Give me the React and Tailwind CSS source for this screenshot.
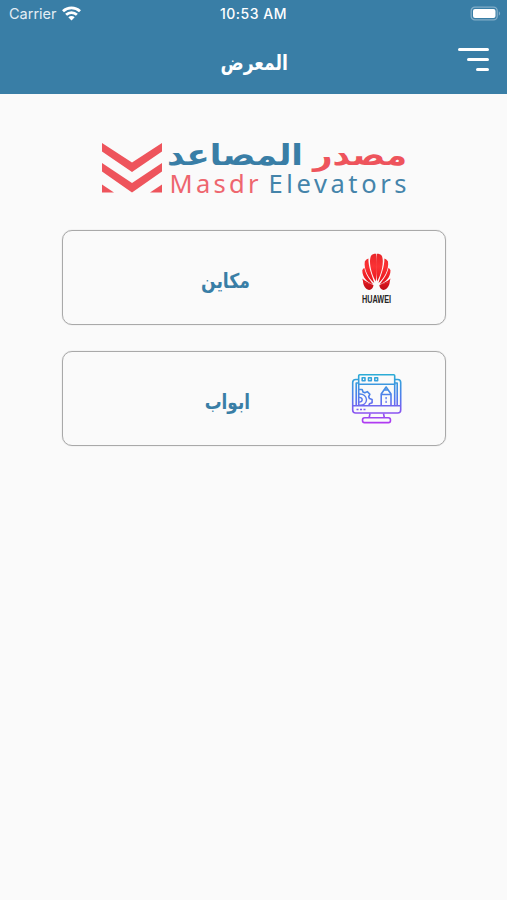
import React from "react";

const arabic = "font-['DejaVu_Sans',sans-serif] font-bold";

function StatusBar() {
  return (
    <div className="grid h-7 grid-cols-3 items-center pl-[9px] pr-[6px] text-white">
      <div className="flex items-center gap-[5px]">
        <span className="font-['Inter',sans-serif] text-[14.5px] leading-7 text-[#e3edf4]">Carrier</span>
        <svg className="mb-[2px]" width="19" height="15" viewBox="0 0 19 15" fill="none" stroke="white" strokeWidth="2.8">
          <path d="M1 5.2C5.8.7 13.2.7 18 5.2" />
          <path d="M4.1 8.8c3.1-2.9 7.7-2.9 10.8 0" />
          <path d="M9.5 14.4 6.3 11.3c1.8-1.6 4.6-1.6 6.4 0Z" fill="white" stroke="none" />
        </svg>
      </div>
      <span className="-ml-[3px] whitespace-nowrap text-center font-['Inter',sans-serif] text-[14px] font-medium leading-7 tracking-[0.5px]">10:53 AM</span>
      <svg className="justify-self-end" width="31" height="16" viewBox="0 0 31 16">
        <rect x="1.2" y="1.2" width="26" height="12.6" rx="3.6" fill="none" stroke="#82adc8" strokeWidth="1.3" />
        <rect x="3" y="3" width="22.5" height="9" rx="2" fill="white" />
        <path d="M28.8 5.3c1.8.8 1.8 3.6 0 4.4Z" fill="#82adc8" />
      </svg>
    </div>
  );
}

function Logo() {
  return (
    <svg className="mx-auto block" width="307" height="62" viewBox="100 138 307 62">
      <g fill="#ee545c">
        <path d="M102 143 132 162.500l30-19.500v8.500L132 172l-30-20.500Z" />
        <path d="M102 163 132 183l30-20v8.500L132 192.500l-30-21Z" />
        <path d="M102 184.500 114 192.500H102ZM162 184.500 150 192.500H162Z" />
      </g>
      <g className={arabic} fontSize="29" direction="rtl">
        <text x="407" y="165" fill="#ee545c" textLength="94" lengthAdjust="spacingAndGlyphs">مصدر</text>
        <text x="303" y="165" fill="#397ea6" textLength="136" lengthAdjust="spacingAndGlyphs">المصاعد</text>
      </g>
      <g className="font-['Noto_Sans',sans-serif]" fontSize="25.500">
        <text x="169.500" y="192.500" fill="#ee666e" textLength="89">Masdr</text>
        <text x="268.500" y="192.500" fill="#4484aa" textLength="138">Elevators</text>
      </g>
    </svg>
  );
}

const petals = [
  "M14.200 28.500C10 21.500 6.800 9 9.500 2.800 10.700 1 12.800.6 14.500.7c1 8 .8 20-.3 27.800Z",
  "M12.800 30C7.500 26 2 16.500 3.300 8.500 4.200 6.700 5.600 5.800 6.900 5.400c-.2 8.600 3.600 16.600 5.900 24.600Z",
  "M11.500 31.200C6 29.500.8 24.500.8 17.200c.5-1.200 1.300-1.800 2.100-2.200C4 21.500 8 26.500 11.500 31.200Z",
  "M1.500 28.500c3.800 1.300 7 2.200 10.500 3.500-.3 3-2 5-4.500 4.900C4 36.500 1.800 32.500 1.500 28.500Z",
  "M.8 25.600C4 28.500 7.500 30.300 11 31.400L1.700 29Z",
];

function Huawei() {
  return (
    <svg width="50" height="52" viewBox="351 251 50 52">
      <defs>
        <linearGradient id="petal" gradientUnits="userSpaceOnUse" x1="0" y1="1" x2="0" y2="37">
          <stop offset="0" stopColor="#e9262a" />
          <stop offset="0.35" stopColor="#fb3234" />
          <stop offset="0.7" stopColor="#ec1920" />
          <stop offset="1" stopColor="#bc0f17" />
        </linearGradient>
      </defs>
      <g fill="url(#petal)">
        <g transform="translate(361.500 252)">
          {petals.map((d) => <path key={d} d={d} />)}
        </g>
        <g transform="translate(391.300 252) scale(-1 1)">
          {petals.map((d) => <path key={d} d={d} />)}
        </g>
      </g>
      <text x="362" y="301.500" textLength="29" lengthAdjust="spacingAndGlyphs" fontSize="10.500" fill="#252525" className="font-['Liberation_Sans',sans-serif] font-bold">HUAWEI</text>
    </svg>
  );
}

function Monitor() {
  return (
    <svg width="52" height="52" viewBox="351 373 52 52" fill="none" stroke="url(#screen)" strokeWidth="1.600" strokeLinejoin="round">
      <defs>
        <linearGradient id="screen" gradientUnits="userSpaceOnUse" x1="0" y1="374" x2="0" y2="424">
          <stop offset="0" stopColor="#2aadd5" />
          <stop offset="0.5" stopColor="#5579ee" />
          <stop offset="1" stopColor="#b537f2" />
        </linearGradient>
      </defs>
      <path d="M358.700 379.500h-3q-3 0-3 3v27.500q0 3 3 3h42q3 0 3-3v-27.500q0-3-3-3h-3" />
      <path d="M358.700 383h-2.500v22.700M394.700 383h2.500v22.700M352.700 405.700h48M358.700 384v21.700M394.700 384v21.700" />
      <path d="M359.700 374.700h34q1 0 1 1v8.500h-36v-8.500q0-1 1-1Z" />
      <path d="M362.200 377.800h2.800v3h-2.800ZM368.500 377.800h2.800v3h-2.800ZM374.800 377.800h2.800v3h-2.800Z" />
      <path d="M359 389.500h3.200l.8 2.500 1.800.8 2.500-1.200 2.600 2.600-1.200 2.500.8 1.900 2.600.8v3.400l-2.600.9-.8 2" />
      <path d="M359 394c4.600-.4 7.500 2.300 7.500 5.800s-2.900 5.900-7.500 5.300M359 397.400c2 0 3.200 1 3.200 2.400s-1.200 2.300-3.200 2.300" strokeWidth="1.400" />
      <path d="M381.200 405v-11l4.900-7 4.900 7v11M381.200 394.500H391M384.500 390h3.200" />
      <path d="M386.100 397v7" strokeDasharray="2.200 1.500" strokeWidth="1.300" />
      <path d="M356.500 409.500h9" strokeDasharray="2 1.500" />
      <path d="M370 413.500l-.8 4M383.500 413.500l.8 4M364.500 417.800h24q2 0 2 2.400t-2 2.400h-24q-2 0-2-2.400t2-2.400Z" />
    </svg>
  );
}

function Category({ label, icon, labelClass, iconClass }) {
  return (
    <button className="flex h-[95px] w-[384px] items-center justify-between rounded-[10px] border border-[#a9a9a9] pl-[137px] shadow-[0_0_1px_#b5b5b5]">
      <span dir="rtl" className={`${arabic} mt-[7px] w-[50px] origin-right whitespace-nowrap text-[20.5px] leading-6 text-[#397ea6] ${labelClass}`}>{label}</span>
      <span className={iconClass}>{icon}</span>
    </button>
  );
}

export default function App() {
  return (
    <div className="h-[900px] w-[507px] overflow-hidden bg-[#fafafa]">
      <header className="h-[94px] bg-[#397ea6]">
        <StatusBar />
        <div className="grid h-[66px] grid-cols-3 items-start px-[18px]">
          <span />
          <h1 dir="rtl" className={`${arabic} mt-[20px] w-[69px] origin-right scale-x-[0.82] justify-self-center whitespace-nowrap text-[21px] leading-[31px] text-white`}>المعرض</h1>
          <button className="mt-[20px] flex w-[31px] flex-col items-end gap-[7px] justify-self-end" aria-label="القائمة">
            <span className="h-[3px] w-[31px] rounded-full bg-white" />
            <span className="h-[3px] w-[22px] rounded-full bg-white" />
            <span className="h-[3px] w-[13px] rounded-full bg-white" />
          </button>
        </div>
      </header>
      <main className="pt-[44px]">
        <Logo />
        <div className="mt-[30px] flex flex-col items-center gap-[26px]">
          <Category label="مكاين" icon={<Huawei />} labelClass="scale-x-[0.84]" iconClass="pr-[44px]" />
          <Category label="ابواب" icon={<Monitor />} labelClass="scale-x-[0.82]" iconClass="pr-[42px]" />
        </div>
      </main>
    </div>
  );
}
